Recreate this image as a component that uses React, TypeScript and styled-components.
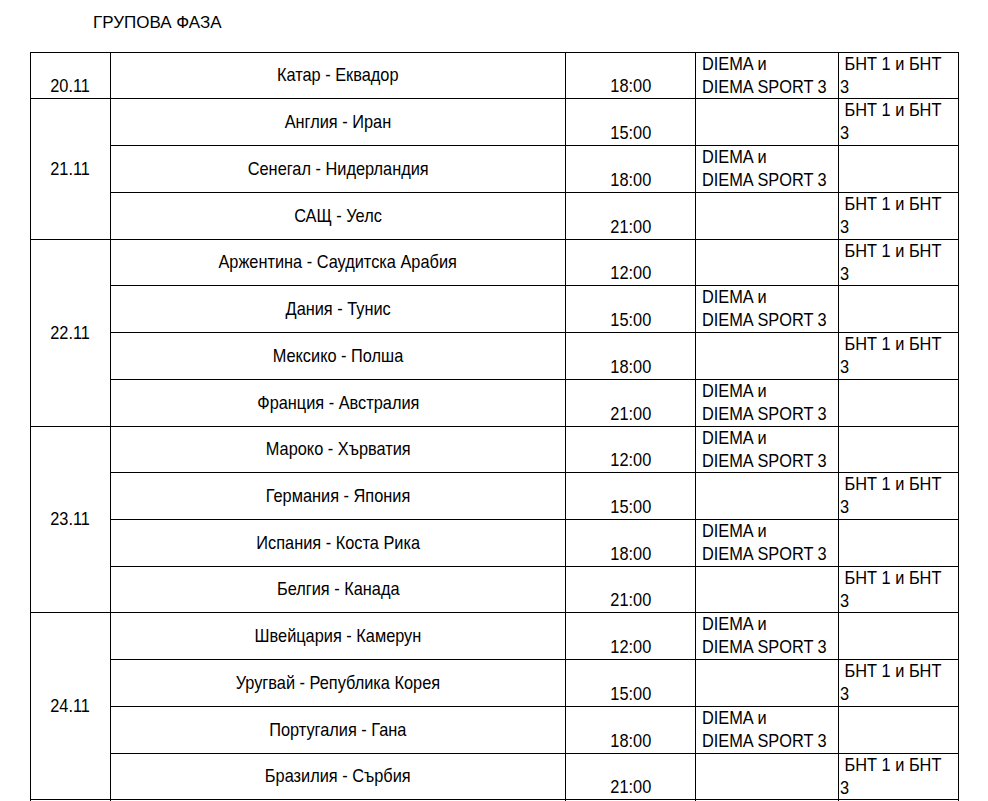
import styled, { createGlobalStyle } from 'styled-components';

const GlobalStyle = createGlobalStyle`
  html, body {
    margin: 0;
    padding: 0;
    background: #fff;
    overflow: hidden;
  }
  body {
    font-family: "Liberation Sans", Arial, sans-serif;
    color: #000;
  }
`;

const Page = styled.div`
  padding-left: 30px;
`;

const Title = styled.h1`
  margin: 0;
  padding: 11px 0 17px 63px;
  font-size: 17px;
  line-height: 24px;
  font-weight: normal;
`;

const Table = styled.div<{ $rows: string }>`
  display: grid;
  grid-template-columns: 80px 455px 130px 143px 120px;
  grid-template-rows: ${p => p.$rows};
  width: max-content;
  border-left: 1px solid #000;
  border-top: 1px solid #000;
`;

const Cell = styled.div<{ $col: number; $span?: number; $v?: string; $h?: string; $pad?: number }>`
  grid-column: ${p => p.$col};
  grid-row: ${p => (p.$span ? `span ${p.$span}` : 'auto')};
  border-right: 1px solid #000;
  border-bottom: 1px solid #000;
  display: flex;
  flex-direction: column;
  justify-content: ${p => p.$v || 'flex-start'};
  align-items: ${p => p.$h || 'flex-start'};
  padding-left: ${p => p.$pad ?? 0}px;
  overflow: hidden;
`;

/* the document font is a tall, narrow Arial: draw it a bit larger and squeeze it */
const Text = styled.span<{ $origin?: string }>`
  display: block;
  font-size: 19px;
  line-height: 23px;
  white-space: pre;
  transform: translateY(-1px) scaleX(0.86);
  transform-origin: ${p => p.$origin || 'center'};
`;

type Game = [string, string, boolean, boolean];

const groups: { date: string; games: Game[] }[] = [
  { date: '20.11', games: [['Катар - Еквадор', '18:00', true, true]] },
  {
    date: '21.11',
    games: [
      ['Англия - Иран', '15:00', false, true],
      ['Сенегал - Нидерландия', '18:00', true, false],
      ['САЩ - Уелс', '21:00', false, true],
    ],
  },
  {
    date: '22.11',
    games: [
      ['Аржентина - Саудитска Арабия', '12:00', false, true],
      ['Дания - Тунис', '15:00', true, false],
      ['Мексико - Полша', '18:00', false, true],
      ['Франция - Австралия', '21:00', true, false],
    ],
  },
  {
    date: '23.11',
    games: [
      ['Мароко - Хърватия', '12:00', true, false],
      ['Германия - Япония', '15:00', false, true],
      ['Испания - Коста Рика', '18:00', true, false],
      ['Белгия - Канада', '21:00', false, true],
    ],
  },
  {
    date: '24.11',
    games: [
      ['Швейцария - Камерун', '12:00', true, false],
      ['Уругвай - Република Корея', '15:00', false, true],
      ['Португалия - Гана', '18:00', true, false],
      ['Бразилия - Сърбия', '21:00', false, true],
    ],
  },
  { date: '', games: [['', '', false, false]] },
];

// horizontal rule positions measured from the document
const lines = [52, 98, 145, 192, 239, 285, 332, 379, 426, 472, 519, 566, 612, 659, 706, 753, 799, 846];
const rowSizes = lines.slice(1).map((y, i) => `${y - lines[i]}px`).join(' ');

export default function App() {
  return (
    <Page>
      <GlobalStyle />
      <Title>ГРУПОВА ФАЗА</Title>
      <Table $rows={rowSizes}>
        {groups.map(g => [
          <Cell
            key={g.date + 'd'}
            $col={1}
            $span={g.games.length}
            $v={g.games.length > 1 ? 'center' : 'flex-end'}
            $h="center"
          >
            <Text>{g.date}</Text>
          </Cell>,
          ...g.games.flatMap(([match, time, diema, bnt], i) => [
            <Cell key={g.date + i + 'm'} $col={2} $v="center" $h="center">
              <Text>{match}</Text>
            </Cell>,
            <Cell key={g.date + i + 't'} $col={3} $v="flex-end" $h="center">
              <Text>{time}</Text>
            </Cell>,
            <Cell key={g.date + i + 'c'} $col={4} $pad={6}>
              {diema && <Text $origin="left">{'DIEMA и\nDIEMA SPORT 3'}</Text>}
            </Cell>,
            <Cell key={g.date + i + 'b'} $col={5} $pad={1}>
              {bnt && <Text $origin="left">{'\u00a0БНТ 1 и БНТ\n3'}</Text>}
            </Cell>,
          ]),
        ])}
      </Table>
    </Page>
  );
}
